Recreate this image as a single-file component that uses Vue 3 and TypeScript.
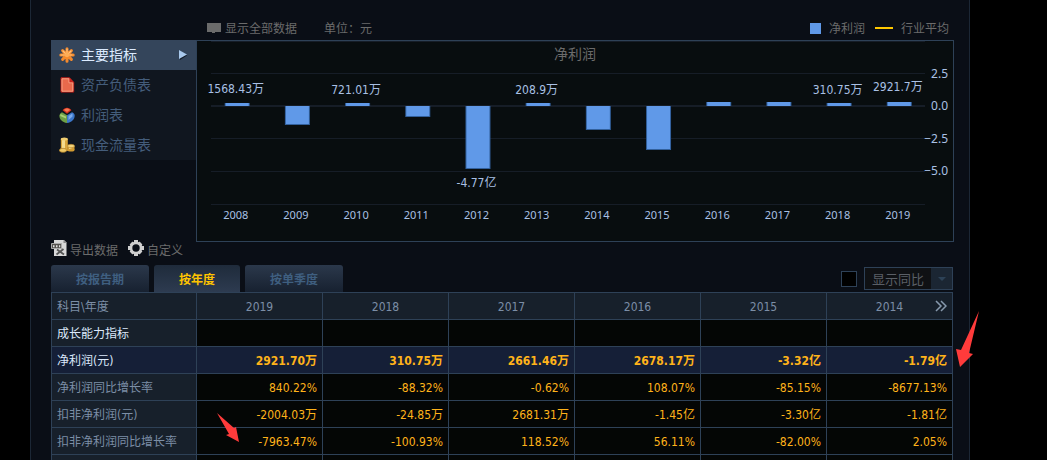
<script setup lang="ts">
import { ref } from 'vue'

interface Bar { year: number; value: number; label?: string; labelY?: number }
interface Row { name: string; tone?: 'group' | 'focus'; values: string[] }

const menu = [
  { id: 'main', name: '主要指标' },
  { id: 'balance', name: '资产负债表' },
  { id: 'profit', name: '利润表' },
  { id: 'cash', name: '现金流量表' },
]
const activeMenu = ref('main')

const tabs = ['按报告期', '按年度', '按单季度']
const activeTab = ref('按年度')
const showCompare = ref(false)
const compareMode = ref('同比')

const bars: Bar[] = [
  { year: 2008, value: 0.16, label: '1568.43万', labelY: 52 },
  { year: 2009, value: -1.46 },
  { year: 2010, value: 0.07, label: '721.01万', labelY: 53 },
  { year: 2011, value: -0.8 },
  { year: 2012, value: -4.77, label: '-4.77亿', labelY: 146 },
  { year: 2013, value: 0.02, label: '208.9万', labelY: 53 },
  { year: 2014, value: -1.79 },
  { year: 2015, value: -3.32 },
  { year: 2016, value: 0.27 },
  { year: 2017, value: 0.27 },
  { year: 2018, value: 0.03, label: '310.75万', labelY: 53 },
  { year: 2019, value: 0.29, label: '2921.7万', labelY: 50 },
]
const ZERO_Y = 65
const UNIT = 13.2
const gridLines = [0, 32, 97, 130, 163]
const axis = [
  { text: '2.5', y: 37 },
  { text: '0.0', y: 69 },
  { text: '−2.5', y: 102 },
  { text: '−5.0', y: 134 },
]
const barX = (i: number) => `${3.6 + i * 8.43}%`
const barHeight = (v: number) => Math.max(3, Math.round(Math.abs(v) * UNIT))
const barTop = (v: number) => (v < 0 ? ZERO_Y : ZERO_Y - barHeight(v))

const years = [2019, 2018, 2017, 2016, 2015, 2014]
const rows: Row[] = [
  { name: '成长能力指标', tone: 'group', values: ['', '', '', '', '', ''] },
  { name: '净利润(元)', tone: 'focus', values: ['2921.70万', '310.75万', '2661.46万', '2678.17万', '-3.32亿', '-1.79亿'] },
  { name: '净利润同比增长率', values: ['840.22%', '-88.32%', '-0.62%', '108.07%', '-85.15%', '-8677.13%'] },
  { name: '扣非净利润(元)', values: ['-2004.03万', '-24.85万', '2681.31万', '-1.45亿', '-3.30亿', '-1.81亿'] },
  { name: '扣非净利润同比增长率', values: ['-7963.47%', '-100.93%', '118.52%', '56.11%', '-82.00%', '2.05%'] },
  { name: '', values: ['', '', '', '', '', ''] },
]
</script>

<template>
  <div class="page">
    <main class="shell">
      <header class="topbar">
        <button class="plain show-all" type="button">
          <svg width="14" height="10" viewBox="0 0 14 10"><path d="M0 0h14v9H8v1H5V9H0z" fill="#6b6b6b" /></svg>
          显示全部数据
        </button>
        <span class="unit">单位：元</span>
        <div class="legend">
          <span class="key"><i class="swatch"></i>净利润</span>
          <span class="key"><i class="dash"></i>行业平均</span>
        </div>
      </header>

      <section class="upper">
        <div class="side">
          <nav class="menu">
            <button
              v-for="m in menu" :key="m.id" type="button"
              class="menu-item" :class="{ active: m.id === activeMenu }"
              @click="activeMenu = m.id"
            >
              <svg v-if="m.id === 'main'" width="16" height="16" viewBox="0 0 16 16">
                <g stroke="#f58a2c" stroke-width="3" stroke-linecap="round">
                  <path d="M8 1.800v12.400M1.800 8h12.400M3.600 3.600l8.800 8.800M12.400 3.600l-8.800 8.800" />
                </g>
                <g stroke="#ffc27c" stroke-width="1.200" stroke-linecap="round">
                  <path d="M8 2v6M2 8h6M4 4l4 4M12 4L8 8M8 8h5" />
                </g>
                <circle cx="8" cy="8" r="2.200" fill="#ffad55" />
              </svg>
              <svg v-else-if="m.id === 'balance'" width="16" height="16" viewBox="0 0 16 16">
                <path d="M2 .8h8.500l4.200 4.400v9.900H2z" fill="#e9694c" stroke="#b51a17" />
                <path d="M3 1.800h7v4h3.800v8.400H3z" fill="none" stroke="#f7a284" />
                <path d="M10.500 1l4 4.200h-4z" fill="#c8201c" />
              </svg>
              <svg v-else-if="m.id === 'profit'" width="16" height="16" viewBox="0 0 16 16">
                <path d="M8 8.200V16C3 15.200.2 12 .4 8.200 1 6.600 2 5.600 3 5.200z" fill="#6da044" />
                <path d="M1.500 7l5.500 2.500v2L1.200 9z" fill="#a9cf78" />
                <path d="M8 8.200L13 5.200c1.500.6 2.500 1.600 2.700 3C15.800 12 13 15.200 8 16z" fill="#3b76c8" />
                <path d="M9.500 9l4-2.500v3L9.500 13z" fill="#7aa9ea" />
                <path d="M3.600 3.200C5.500-.2 10.500-.2 12.400 3.200L8 6.800z" fill="#d9311d" />
                <path d="M5 3c1.500-2 4.500-2 6 0L8 5z" fill="#f47a55" />
              </svg>
              <svg v-else width="16" height="16" viewBox="0 0 16 16">
                <path d="M1.800 2h7v12h-7z" fill="#d9a63c" />
                <path d="M3 2h3v12H3z" fill="#f6dc8d" />
                <ellipse cx="5.300" cy="2" rx="3.500" ry="1.500" fill="#f2cf72" />
                <ellipse cx="4" cy="13.300" rx="3.600" ry="2" fill="#f0cb68" stroke="#ae7a20" stroke-width=".7" />
                <path d="M8.500 9h7v4h-7z" fill="#d39c32" />
                <path d="M10 9h2.500v5H10z" fill="#f7df98" />
                <ellipse cx="12" cy="9" rx="3.500" ry="1.700" fill="#f4d57b" stroke="#b8842a" stroke-width=".6" />
                <ellipse cx="12" cy="13" rx="3.500" ry="1.500" fill="#d39c32" />
              </svg>
              <span>{{ m.name }}</span>
              <svg v-if="m.id === activeMenu" class="pointer" width="9" height="10" viewBox="0 0 9 10">
                <path d="M1 1l7 4.500L1 10z" fill="#111a26" /><path d="M0 0l8 4.500L0 9z" fill="#a9c9ec" />
              </svg>
            </button>
          </nav>
          <div class="actions">
            <button class="plain" type="button">
              <svg width="16" height="16" viewBox="0 0 16 16">
                <path d="M3 0h10l2.500 2.500V16H3z" fill="#d8d8d8" /><path d="M12.500 0v3h3z" fill="#8a8a8a" />
                <path d="M6 9.500l7 5M12.500 9l-7 5.500" stroke="#555" stroke-width="1.800" />
                <path d="M.5 3.500h10v5H.5z" fill="#55534f" stroke="#aaa" />
                <path d="M2 5.200h1.500v2H2zM5 5.200h1.500v2H5zM8 5.200h1.200v2H8z" fill="#e2e2e2" />
              </svg>
              <span>导出数据</span>
            </button>
            <button class="plain" type="button">
              <svg width="16" height="16" viewBox="0 0 16 16">
                <g fill="#d0d0d0">
                  <path d="M6 0h4v16H6z" /><path d="M0 6h16v4H0z" />
                  <path d="M1.600 4.400l2.800-2.800 10 10-2.800 2.800z" /><path d="M11.600 1.600l2.800 2.800-10 10-2.800-2.800z" />
                  <circle cx="8" cy="8" r="6.400" />
                </g>
                <circle cx="8" cy="8" r="3.700" fill="#0a0f17" />
              </svg>
              <span>自定义</span>
            </button>
          </div>
        </div>

        <figure class="chart">
          <figcaption>净利润</figcaption>
          <svg class="plot" width="100%" height="200">
            <rect v-for="g in gridLines" :key="g" x="0" :y="g" width="100%" height="1" fill="#161d27" />
            <rect x="0" y="64" width="100%" height="2" fill="#161d27" />
            <svg v-for="(b, i) in bars" :key="b.year" :x="barX(i)" y="0" overflow="visible">
              <rect x="-12" :y="barTop(b.value)" width="25" :height="barHeight(b.value)" fill="#32609c" />
              <rect x="-11" :y="barTop(b.value)" width="23" :height="barHeight(b.value) - (b.value < 0 ? 1 : 0)" fill="#6099e8" />
              <text v-if="b.label" class="value" x="-1" :y="b.labelY" text-anchor="middle">{{ b.label }}</text>
              <text class="year" x="-1" y="178" text-anchor="middle">{{ b.year }}</text>
            </svg>
            <text v-for="a in axis" :key="a.text" class="tick" x="100%" dx="23" :y="a.y" text-anchor="end">{{ a.text }}</text>
          </svg>
        </figure>
      </section>

      <section class="tabbar">
        <button
          v-for="t in tabs" :key="t" type="button" class="tab" :class="{ active: t === activeTab }"
          @click="activeTab = t"
        >{{ t }}</button>
        <div class="compare">
          <input v-model="showCompare" type="checkbox" aria-label="显示同比" />
          <div class="select">
            <select v-model="compareMode" aria-label="对比方式"><option value="同比">显示同比</option></select>
            <span class="drop"><svg width="8" height="4" viewBox="0 0 8 4"><path d="M0 0h8L4 4z" fill="#2d4257" /></svg></span>
          </div>
        </div>
      </section>

      <table>
        <colgroup><col class="name-col" /><col v-for="y in years" :key="y" /></colgroup>
        <thead>
          <tr>
            <th scope="col" class="name">科目\年度</th>
            <th v-for="(y, i) in years" :key="y" scope="col">
              {{ y }}
              <button v-if="i === years.length - 1" class="plain more" type="button" aria-label="更多年度">
                <svg width="12" height="12" viewBox="0 0 12 12"><path d="M1 1l5 5-5 5M6 1l5 5-5 5" fill="none" stroke="#8799ad" stroke-width="1.500" /></svg>
              </button>
            </th>
          </tr>
        </thead>
        <tbody>
          <tr v-for="(r, i) in rows" :key="i" :class="r.tone">
            <th scope="row" class="name">{{ r.name }}</th>
            <td v-for="(v, j) in r.values" :key="j">{{ v }}</td>
          </tr>
        </tbody>
      </table>
    </main>

    <svg class="mark mark-left" width="23" height="30" viewBox="0 0 23 30"><path d="M0 0l17 15 2-1 3 15-13-7 3-1z" fill="#ff3b3b" /></svg>
    <svg class="mark mark-right" width="24" height="57" viewBox="0 0 24 57"><path d="M23 0L13 42l4 1L4 56 0 38l5 1z" fill="#ff3b3b" /></svg>
  </div>
</template>

<style>
body { background: #000; }
</style>

<style scoped>
.page {
  position: relative;
  height: 100vh;
  overflow: hidden;
  box-sizing: border-box;
  padding: 0 77px 0 30px;
  background: #000;
  color: #6b6b6b;
  font: 12px/18px "Noto Sans CJK SC", sans-serif;
}
.shell {
  min-height: 100%;
  box-sizing: border-box;
  padding: 16px 15px 0 20px;
  border: solid #1c2735;
  border-width: 0 1px;
  background: #0a0e16;
}
button, select { font: inherit; }
svg { display: block; flex: none; }
.plain {
  display: flex;
  align-items: center;
  padding: 0;
  border: 0;
  background: none;
  color: inherit;
  white-space: nowrap;
}
.topbar {
  display: flex;
  align-items: center;
  height: 24px;
  padding: 0 5px 0 156px;
}
.show-all { gap: 4px; }
.unit { margin-left: 27px; }
.legend { display: flex; gap: 10px; margin-left: auto; }
.key { display: flex; align-items: center; gap: 8px; }
.swatch { width: 11px; height: 11px; background: #6099e8; }
.dash { width: 18px; height: 2px; background: #ffc800; }

.upper { display: flex; align-items: flex-start; }
.side {
  display: flex;
  flex: 0 0 145px;
  flex-direction: column;
  justify-content: space-between;
  min-height: 219px;
}
.menu { background: #10161f; }
.menu-item {
  display: flex;
  align-items: center;
  gap: 6px;
  width: 100%;
  height: 30px;
  padding: 0 8px;
  border: 0;
  background: none;
  color: #445d7b;
  font-size: 14px;
  line-height: 20px;
}
.menu-item span { padding-bottom: 2px; }
.menu-item.active { background: #34455b; color: #dcebff; }
.pointer { margin-left: auto; }
.actions { display: flex; gap: 10px; line-height: 18px; }
.actions .plain { align-items: flex-start; gap: 3px; }
.actions span { padding-top: 1px; }

.chart {
  position: relative;
  flex: 1;
  min-width: 0;
  margin: 0;
  padding: 0 28px 0 14px;
  border: 1px solid #2e4157;
  background: #080d0f;
}
.chart figcaption {
  position: absolute;
  inset: 2px 0 auto;
  text-align: center;
  font-size: 14px;
  line-height: 20px;
}
.plot { overflow: visible; fill: #a9c0e4; }
.value { font: 12px "DejaVu Sans Condensed", "Noto Sans CJK SC", sans-serif; }
.year { font: 11px "Noto Sans", sans-serif; }
.tick { font: 12px "Noto Sans", sans-serif; }

.tabbar { display: flex; gap: 5px; margin: 6px 1px 0 0; }
.tab {
  height: 27px;
  padding: 0 25px;
  border: 0;
  border-radius: 3px 3px 0 0;
  background: linear-gradient(#2b384b, #172130);
  color: #3f5f80;
  font-weight: bold;
}
.tab.active { background: linear-gradient(#1f2b3b, #2d3b50); color: #ffc400; }
.compare { display: flex; align-items: center; gap: 7px; margin-left: auto; }
.compare input {
  appearance: none;
  width: 16px;
  height: 16px;
  margin: 0;
  border: 1px solid #2e4157;
  background: #000;
}
.select { position: relative; }
.select select {
  appearance: none;
  display: block;
  width: 89px;
  height: 23px;
  padding: 0 7px;
  border: 1px solid #2e4157;
  border-radius: 0;
  background: #0f1114;
  color: #5a5f66;
  font-size: 13px;
  opacity: 1;
}
.drop {
  position: absolute;
  inset: 1px 1px 1px auto;
  display: grid;
  place-items: center;
  width: 21px;
  background: #1b2633;
  pointer-events: none;
}

table {
  width: calc(100% - 1px);
  table-layout: fixed;
  border-collapse: collapse;
  background: #040605;
}
.name-col { width: 145px; }
th, td {
  height: 24px;
  padding: 2px 5px 0;
  border: 1px solid #2e4157;
  font-family: "DejaVu Sans Condensed", "Noto Sans CJK SC", sans-serif;
  font-weight: normal;
  line-height: 18px;
}
th { position: relative; background: #17202b; color: #7c8ea6; }
.name { text-align: left; white-space: nowrap; }
td { color: #ffb31a; text-align: right; }
.group .name, .focus .name { color: #dce9fb; }
.focus .name, .focus td { background: #151f37; }
.focus td { font-weight: bold; }
.more { position: absolute; inset: 0 5px 0 auto; }

.mark { position: absolute; pointer-events: none; }
.mark-left { left: 217px; top: 413px; }
.mark-right { left: 956px; top: 311px; }
</style>
